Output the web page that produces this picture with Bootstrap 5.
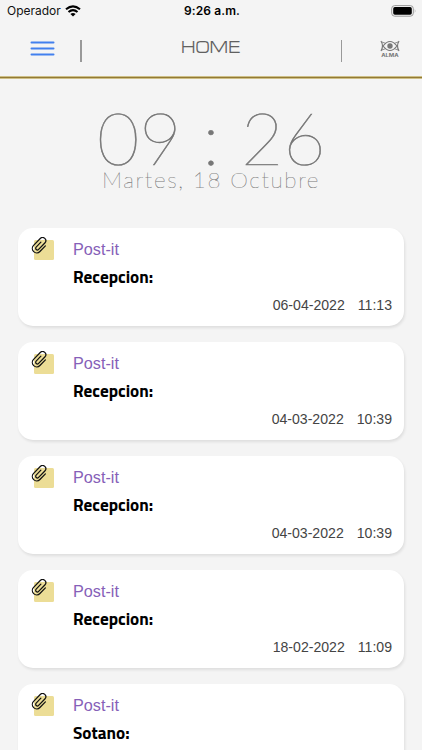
<!DOCTYPE html>
<html lang="es">
<head>
<meta charset="utf-8">
<meta name="viewport" content="width=device-width, initial-scale=1">
<title>Home</title>
<link rel="stylesheet" href="https://cdn.jsdelivr.net/npm/bootstrap@5.3.0/dist/css/bootstrap.min.css">
<style>
body{background:#f4f4f4;font-family:"Liberation Sans",Arial,sans-serif;height:750px;overflow:hidden}
svg{display:block;flex:none}
.status{height:22px;font-family:Inter,sans-serif;font-size:12px;line-height:22px;color:#111;padding:0 5px 0 7px}
.status>div{flex:1 1 0}
.status .hour{flex:none;font-weight:600;letter-spacing:.1px;color:#000}
.topbar{height:54px;padding:0 22px 0 30px}
.goldline{height:3px;background:linear-gradient(#cdbf86 0 1px,#937a35 1px 2px,#cdbf86 2px)}
.rule{width:1.5px;height:22px;background:#999}
.title{width:62px;height:20px;overflow:visible}
.clock{height:56px;font:100 73px/56px Lato,sans-serif;color:#777;margin-top:30px;-webkit-text-stroke:.6px #777}
.clock span{width:84px;text-align:center}
.clock .sep{width:60px}
.today{font:100 22.5px/26px Lato,sans-serif;letter-spacing:1.65px;color:#777;-webkit-text-stroke:.2px #777;margin-top:2px}
.notes{padding:35px 18px 0;gap:16px}
.note{height:98px;border:0;border-radius:15px;box-shadow:1px 2px 3px rgba(0,0,0,.09);padding:9px 12px 0 13px;flex:none}
.kind{font-size:16.2px;line-height:24px;color:#8660b8}
.who{font:700 17.2px/24px "Titillium Web","Noto Sans",sans-serif;color:#000;margin-top:4px}
.when{font-size:14.1px;line-height:20px;color:#444;gap:13px;margin-top:6px}
</style>
</head>
<body>
<header>
<div class="status d-flex align-items-center">
<div class="d-flex align-items-center gap-1"><span>Operador</span>
<svg width="16" height="12" viewBox="0 0 16 12" fill="none" stroke="#000" stroke-width="2.1"><path d="M1 4.3Q8-1.7 15 4.3M3.5 7Q8 3.2 12.5 7"/><path d="M5.4 9Q8 7 10.6 9L8 11.6Z" fill="#000" stroke="none"/></svg></div>
<div class="hour">9:26 a.m.</div>
<div class="d-flex justify-content-end"><svg width="26" height="12" viewBox="0 0 26 12"><rect x=".7" y=".6" width="21.6" height="10.6" rx="3" fill="none" stroke="#999"/><rect x="2.2" y="2.1" width="18.6" height="7.6" rx="1.6"/><path d="M23.8 4q1.3 2 0 4z" fill="#999"/></svg></div>
</div>
<nav class="topbar d-flex align-items-center">
<svg width="25" height="16" viewBox="0 0 25 16" stroke="#4280ee" stroke-width="2" stroke-linecap="round"><path d="M1.5 1.5h22M1.5 7.5h22M1.5 13.5h22"/></svg>
<div class="rule mt-1" style="margin-left:25px"></div>
<div class="flex-fill d-flex justify-content-center"><svg class="title" viewBox="0 0 62 20"><text x="1" y="14" font-family="Michroma,'Titillium Web',Inter,sans-serif" font-size="15.2" fill="#606060" textLength="59" lengthAdjust="spacingAndGlyphs">HOME</text></svg></div>
<div class="rule mt-1" style="margin-right:38px"></div>
<svg width="20" height="18" viewBox="0 0 20 18" fill="none" stroke="#777" stroke-width="1.2"><path d="M1 1Q4 6 1 11M19 1Q16 6 19 11M3 6Q10-3 17 6Q10 15 3 6Z"/><path d="M2 2L6 3.5M18 2L14 3.5M2 10L6 8.5M18 10L14 8.5" stroke-width=".8"/><circle cx="10" cy="6" r="2.7" fill="#777" stroke="none"/><text x="1.2" y="17.2" font-family="Inter,sans-serif" font-size="4.8" font-weight="700" fill="#777" stroke="none" textLength="17.5" lengthAdjust="spacingAndGlyphs">ALMA</text></svg>
</nav>
<div class="goldline"></div>
</header>
<main>
<div class="clock d-flex justify-content-center"><span>09</span><span class="sep">:</span><span>26</span></div>
<div class="today text-center">Martes, 18 Octubre</div>
<section class="notes d-flex flex-column" id="notes"></section>
</main>
<template id="note">
<article class="note card">
<div class="d-flex">
<svg width="42" height="28" viewBox="0 0 42 28"><rect x="3" y="3" width="20" height="20" rx="1.5" fill="#ecdd96"/><g transform="translate(8.8 8.3) rotate(44)" fill="none" stroke="#111" stroke-width="1.25" stroke-linecap="round"><path d="M4.4-3.5V4.4a4.4 4.4 0 0 1-8.8 0V-5.2a3.2 3.2 0 0 1 6.4 0V3.8a1.7 1.7 0 0 1-3.4 0V-3"/></g></svg>
<div><div class="kind">Post-it</div><div class="who"></div></div>
</div>
<div class="when d-flex justify-content-end"><span class="day"></span><span class="time"></span></div>
</article>
</template>
<script src="https://cdn.jsdelivr.net/npm/bootstrap@5.3.0/dist/js/bootstrap.bundle.min.js"></script>
<script>
[["Recepcion:","06-04-2022","11:13"],["Recepcion:","04-03-2022","10:39"],["Recepcion:","04-03-2022","10:39"],["Recepcion:","18-02-2022","11:09"],["Sotano:","",""]].forEach(function(n){
var c=document.getElementById("note").content.cloneNode(true);
c.querySelector(".who").textContent=n[0];
c.querySelector(".day").textContent=n[1];
c.querySelector(".time").textContent=n[2];
document.getElementById("notes").append(c);
});
</script>
</body>
</html>
